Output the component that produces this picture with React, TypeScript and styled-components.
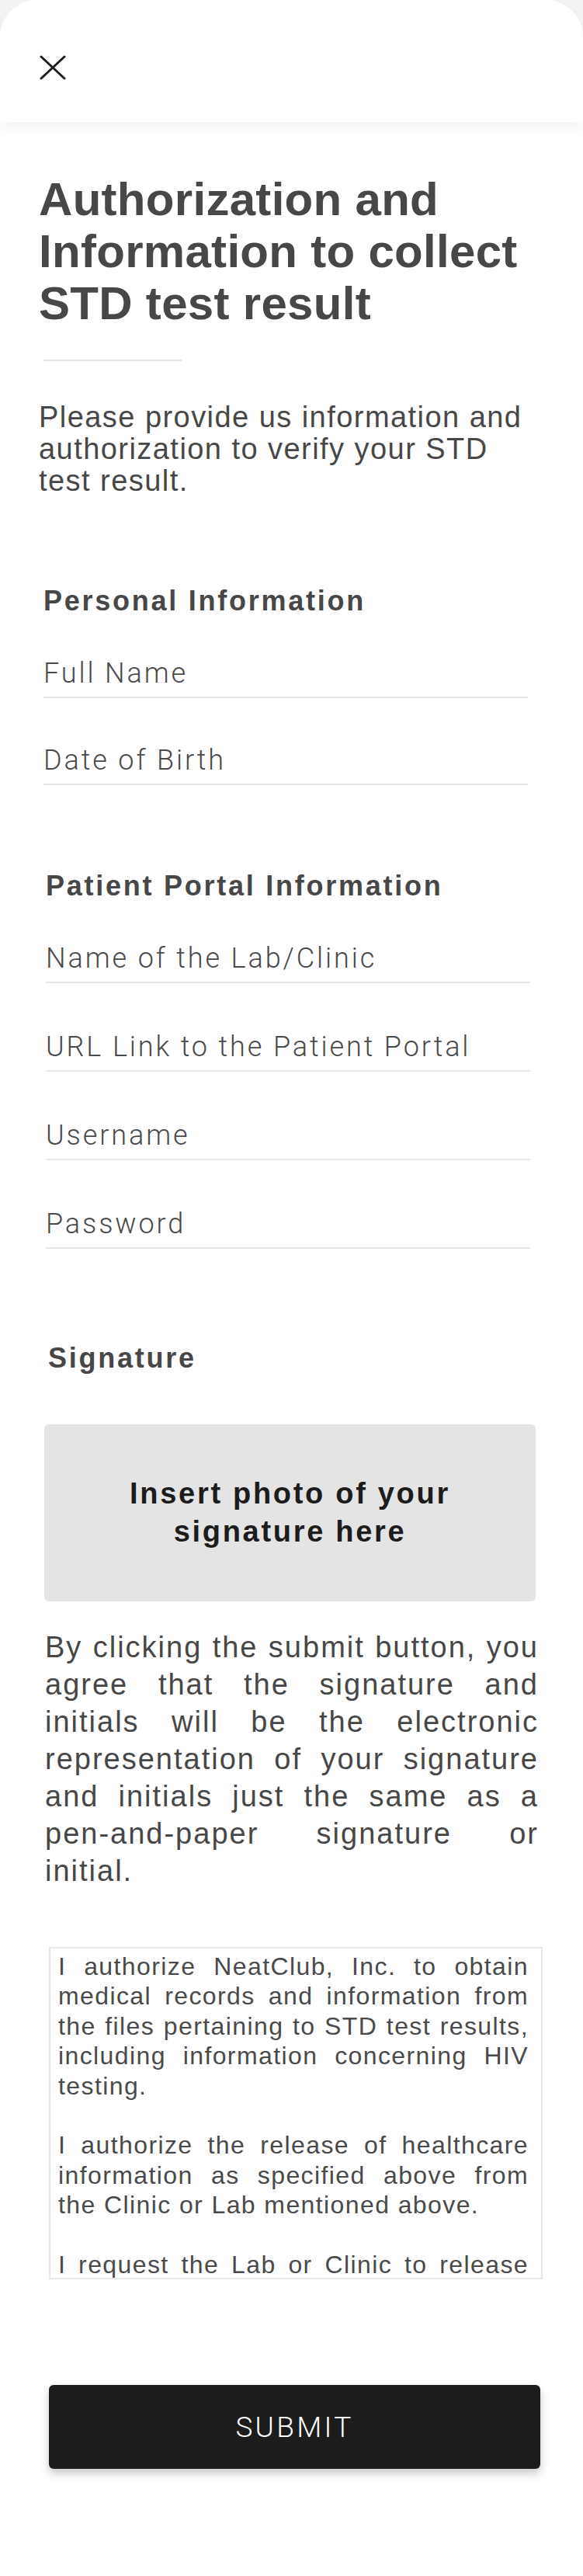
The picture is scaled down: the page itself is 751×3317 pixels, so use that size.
import styled, { createGlobalStyle } from "styled-components";

const GlobalStyle = createGlobalStyle`
  html, body {
    margin: 0;
    padding: 0;
    background: #f3f3f3;
  }
  * {
    box-sizing: border-box;
  }
`;

const personalFields = ["Full Name", "Date of Birth"];
const portalFields = [
  "Name of the Lab/Clinic",
  "URL Link to the Patient Portal",
  "Username",
  "Password",
];

const consentLines = [
  "By clicking the submit button, you",
  "agree that the signature and",
  "initials will be the electronic",
  "representation of your signature",
  "and initials just the same as a",
  "pen-and-paper signature or",
  "initial.",
];

const legalParagraphs = [
  "I authorize NeatClub, Inc. to obtain medical records and information from the files pertaining to STD test results, including information concerning HIV testing.",
  "I authorize the release of healthcare information as specified above from the Clinic or Lab mentioned above.",
  "I request the Lab or Clinic to release my STD test results.",
];

function CloseIcon() {
  return (
    <svg width="34" height="32" viewBox="0 0 34 32" fill="none">
      <path
        d="M2 2 L32 30 M32 2 L2 30"
        stroke="#1c1c1c"
        strokeWidth="3"
        strokeLinecap="round"
      />
    </svg>
  );
}

function App() {
  return (
    <>
      <GlobalStyle />
      <Sheet>
        <Header>
          <CloseButton aria-label="Close">
            <CloseIcon />
          </CloseButton>
        </Header>

        <Content>
          <Title>Authorization and Information to collect STD test result</Title>
          <Divider />
          <Intro>
            Please provide us information and authorization to verify your STD
            test result.
          </Intro>

          <Section $top={112} $indent={6}>
            <SectionTitle>Personal Information</SectionTitle>
            {personalFields.map((label, i) => (
              <Field key={label} $gap={i === 0 ? 50 : 59}>
                <FieldLabel>{label}</FieldLabel>
              </Field>
            ))}
          </Section>

          <Section $top={108} $indent={9}>
            <SectionTitle>Patient Portal Information</SectionTitle>
            {portalFields.map((label, i) => (
              <Field key={label} $gap={i === 0 ? 50 : 61}>
                <FieldLabel>{label}</FieldLabel>
              </Field>
            ))}
          </Section>

          <Section $top={119} $indent={12}>
            <SectionTitle>Signature</SectionTitle>
          </Section>

          <SignatureBox>Insert photo of your signature here</SignatureBox>

          <Consent>
            {consentLines.map((line, i) => (
              <ConsentLine key={i} $last={i === consentLines.length - 1}>
                {line}
              </ConsentLine>
            ))}
          </Consent>

          <LegalBox>
            {legalParagraphs.map((text, i) => (
              <LegalText key={i}>{text}</LegalText>
            ))}
          </LegalBox>

          <SubmitButton type="button">SUBMIT</SubmitButton>
        </Content>
      </Sheet>
    </>
  );
}

export default App;

const Sheet = styled.div`
  width: 751px;
  min-height: 3317px;
  background: #ffffff;
  border-radius: 48px 48px 0 0;
  font-family: "Liberation Sans", Arial, sans-serif;
  color: #474747;
`;

const Header = styled.header`
  height: 157px;
  border-radius: 48px 48px 0 0;
  background: #ffffff;
  box-shadow: 0 10px 18px rgba(0, 0, 0, 0.045);
  padding: 71px 0 0 51px;
  position: relative;
  z-index: 1;
`;

const CloseButton = styled.button`
  border: none;
  background: none;
  padding: 0;
  margin: 0;
  display: block;
  cursor: pointer;
`;

const Content = styled.main`
  padding: 66px 0 130px 50px;
  display: flex;
  flex-direction: column;
  align-items: flex-start;
`;

const Title = styled.h1`
  margin: 0;
  width: 670px;
  font-size: 60px;
  font-weight: 700;
  line-height: 67px;
  letter-spacing: 0.3px;
  color: #474747;
`;

const Divider = styled.div`
  width: 179px;
  height: 2px;
  margin: 39px 0 0 5px;
  background: #e5e5e5;
`;

const Intro = styled.p`
  margin: 52px 0 0;
  width: 640px;
  font-size: 38px;
  line-height: 41px;
  letter-spacing: 1.45px;
  color: #474747;
`;

const Section = styled.section<{ $top: number; $indent: number }>`
  margin-top: ${(p) => p.$top}px;
  margin-left: ${(p) => p.$indent}px;
  width: 624px;
  display: flex;
  flex-direction: column;
`;

const SectionTitle = styled.h2`
  margin: 0;
  font-size: 36px;
  font-weight: 700;
  line-height: 44px;
  letter-spacing: 2.75px;
  color: #474747;
`;

const Field = styled.div<{ $gap: number }>`
  margin-top: ${(p) => p.$gap}px;
  padding-bottom: 9px;
  border-bottom: 2px solid #e6e6e6;
`;

const FieldLabel = styled.span`
  display: block;
  font-family: Roboto, "Liberation Sans", sans-serif;
  font-weight: 300;
  font-size: 36px;
  line-height: 42px;
  letter-spacing: 2.9px;
  color: #4a4a4a;
`;

const SignatureBox = styled.div`
  margin: 63px 0 0 7px;
  width: 633px;
  height: 228px;
  padding: 0 90px;
  border-radius: 6px;
  background: #e4e4e4;
  display: flex;
  align-items: center;
  justify-content: center;
  text-align: center;
  font-size: 38px;
  font-weight: 700;
  line-height: 49px;
  letter-spacing: 2.7px;
  color: #1c1c1c;
`;

const Consent = styled.div`
  margin: 35px 0 0 8px;
  width: 636px;
`;

const ConsentLine = styled.p<{ $last: boolean }>`
  margin: 0;
  font-size: 38px;
  line-height: 48px;
  letter-spacing: 2px;
  color: #474747;
  text-align: justify;
  text-align-last: ${(p) => (p.$last ? "left" : "justify")};
`;

const LegalBox = styled.div`
  margin: 74px 0 0 13px;
  width: 636px;
  height: 428px;
  padding: 4px 16px 4px 10px;
  border: 2px solid #e8e8e8;
  overflow: hidden;
`;

const LegalText = styled.p`
  margin: 0 0 38.4px;
  font-size: 32px;
  line-height: 38.4px;
  letter-spacing: 1.4px;
  text-align: justify;
  color: #4a4a4a;
`;

const SubmitButton = styled.button`
  margin: 136px 0 0 13px;
  width: 633px;
  height: 108px;
  border: none;
  border-radius: 6px;
  background: #1c1c1c;
  box-shadow: 0 6px 12px rgba(0, 0, 0, 0.22);
  font-family: Roboto, "Liberation Sans", sans-serif;
  font-weight: 300;
  font-size: 37px;
  letter-spacing: 3.3px;
  color: #ffffff;
  cursor: pointer;
`;
